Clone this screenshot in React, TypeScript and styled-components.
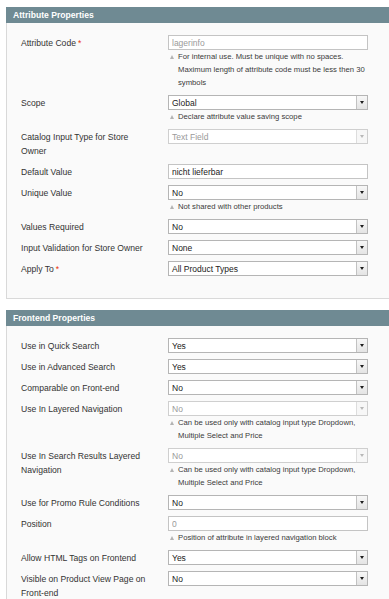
import styled, { createGlobalStyle } from 'styled-components';

const GlobalStyle = createGlobalStyle`
  html, body {
    margin: 0;
    padding: 0;
    background: #ffffff;
    overflow: hidden;
  }
  body {
    font-family: "Liberation Sans", Arial, sans-serif;
    color: #333333;
  }
`;

const Page = styled.div`
  width: 430px;
  padding: 7px 0 0 6px;
  display: flex;
  flex-direction: column;
  gap: 11px;
`;

const Section = styled.section`
  display: flex;
  flex-direction: column;
`;

const SectionHeader = styled.h3`
  margin: 0;
  height: 16px;
  line-height: 16px;
  padding-left: 7px;
  background-color: #6f8a93;
  color: #ffffff;
  font-size: 8.6px;
  font-weight: bold;
`;

const SectionBody = styled.div`
  background-color: #fafafa;
  border: 1px solid #d9d9d9;
  border-top: none;
  padding: 6px 0 22px 14px;
`;

const Row = styled.div`
  display: grid;
  grid-template-columns: 147px 200px;
  align-items: start;
  padding-top: 6px;
`;

const Label = styled.label`
  width: 130px;
  padding-top: 1px;
  font-size: 8.6px;
  line-height: 14px;
  color: #333333;
`;

const Required = styled.span`
  color: #eb340a;
  margin-left: 2px;
`;

const Value = styled.div`
  display: flex;
  flex-direction: column;
`;

const TextInput = styled.input<{ $muted?: boolean }>`
  box-sizing: border-box;
  width: 200px;
  height: 15px;
  margin: 0;
  padding: 0 3px;
  border: 1px solid #c4c4c4;
  background: #ffffff;
  font-family: "Liberation Sans", Arial, sans-serif;
  font-size: 8.5px;
  color: ${(p) => (p.$muted ? '#9a9a9a' : '#222222')};
  outline: none;
`;

const SelectBox = styled.div<{ $disabled?: boolean }>`
  box-sizing: border-box;
  width: 200px;
  height: 15px;
  display: flex;
  align-items: center;
  border: 1px solid ${(p) => (p.$disabled ? '#cfcfcf' : '#b5b5b5')};
  background: #ffffff;
  padding-left: 3px;
  font-size: 8.5px;
  color: ${(p) => (p.$disabled ? '#9a9a9a' : '#222222')};
`;

const SelectText = styled.span`
  flex: 1;
`;

const ArrowButton = styled.span<{ $disabled?: boolean }>`
  box-sizing: border-box;
  width: 11px;
  height: 13px;
  display: flex;
  align-items: center;
  justify-content: center;
  border-left: 1px solid ${(p) => (p.$disabled ? '#dddddd' : '#c2c2c2')};
  background: ${(p) =>
    p.$disabled ? '#f7f7f7' : 'linear-gradient(#f7f7f7, #e4e4e4)'};

  &::after {
    content: '';
    width: 0;
    height: 0;
    border-left: 2.5px solid transparent;
    border-right: 2.5px solid transparent;
    border-top: 3px solid ${(p) => (p.$disabled ? '#b8b8b8' : '#1e1e1e')};
  }
`;

const Note = styled.div`
  display: flex;
  align-items: flex-start;
  gap: 4px;
  padding-left: 2px;
  font-size: 7.7px;
  line-height: 13px;
  color: #3a3a3a;
`;

const NoteMarker = styled.span`
  flex: none;
  width: 0;
  height: 0;
  margin-top: 4.5px;
  border-left: 2.5px solid transparent;
  border-right: 2.5px solid transparent;
  border-bottom: 4px solid #b3b3b3;
`;

const NoteText = styled.span`
  width: 196px;
`;

type Control =
  | { kind: 'input'; value: string; muted?: boolean }
  | { kind: 'select'; value: string; disabled?: boolean };

interface IField {
  label: string;
  required?: boolean;
  control: Control;
  note?: string;
}

interface ISection {
  title: string;
  fields: IField[];
}

const sections: ISection[] = [
  {
    title: 'Attribute Properties',
    fields: [
      {
        label: 'Attribute Code',
        required: true,
        control: { kind: 'input', value: 'lagerinfo', muted: true },
        note: 'For internal use. Must be unique with no spaces. Maximum length of attribute code must be less then 30 symbols',
      },
      {
        label: 'Scope',
        control: { kind: 'select', value: 'Global' },
        note: 'Declare attribute value saving scope',
      },
      {
        label: 'Catalog Input Type for Store Owner',
        control: { kind: 'select', value: 'Text Field', disabled: true },
      },
      {
        label: 'Default Value',
        control: { kind: 'input', value: 'nicht lieferbar' },
      },
      {
        label: 'Unique Value',
        control: { kind: 'select', value: 'No' },
        note: 'Not shared with other products',
      },
      { label: 'Values Required', control: { kind: 'select', value: 'No' } },
      {
        label: 'Input Validation for Store Owner',
        control: { kind: 'select', value: 'None' },
      },
      {
        label: 'Apply To',
        required: true,
        control: { kind: 'select', value: 'All Product Types' },
      },
    ],
  },
  {
    title: 'Frontend Properties',
    fields: [
      { label: 'Use in Quick Search', control: { kind: 'select', value: 'Yes' } },
      { label: 'Use in Advanced Search', control: { kind: 'select', value: 'Yes' } },
      { label: 'Comparable on Front-end', control: { kind: 'select', value: 'No' } },
      {
        label: 'Use In Layered Navigation',
        control: { kind: 'select', value: 'No', disabled: true },
        note: 'Can be used only with catalog input type Dropdown, Multiple Select and Price',
      },
      {
        label: 'Use In Search Results Layered Navigation',
        control: { kind: 'select', value: 'No', disabled: true },
        note: 'Can be used only with catalog input type Dropdown, Multiple Select and Price',
      },
      {
        label: 'Use for Promo Rule Conditions',
        control: { kind: 'select', value: 'No' },
      },
      {
        label: 'Position',
        control: { kind: 'input', value: '0', muted: true },
        note: 'Position of attribute in layered navigation block',
      },
      {
        label: 'Allow HTML Tags on Frontend',
        control: { kind: 'select', value: 'Yes' },
      },
      {
        label: 'Visible on Product View Page on Front-end',
        control: { kind: 'select', value: 'No' },
      },
    ],
  },
];

function FieldControl({ control }: { control: Control }) {
  if (control.kind === 'input') {
    return <TextInput readOnly value={control.value} $muted={control.muted} />;
  }
  return (
    <SelectBox $disabled={control.disabled}>
      <SelectText>{control.value}</SelectText>
      <ArrowButton $disabled={control.disabled} />
    </SelectBox>
  );
}

export default function App() {
  return (
    <>
      <GlobalStyle />
      <Page>
        {sections.map((section) => (
          <Section key={section.title}>
            <SectionHeader>{section.title}</SectionHeader>
            <SectionBody>
              {section.fields.map((field) => (
                <Row key={field.label}>
                  <Label>
                    {field.label}
                    {field.required && <Required>*</Required>}
                  </Label>
                  <Value>
                    <FieldControl control={field.control} />
                    {field.note && (
                      <Note>
                        <NoteMarker />
                        <NoteText>{field.note}</NoteText>
                      </Note>
                    )}
                  </Value>
                </Row>
              ))}
            </SectionBody>
          </Section>
        ))}
      </Page>
    </>
  );
}
